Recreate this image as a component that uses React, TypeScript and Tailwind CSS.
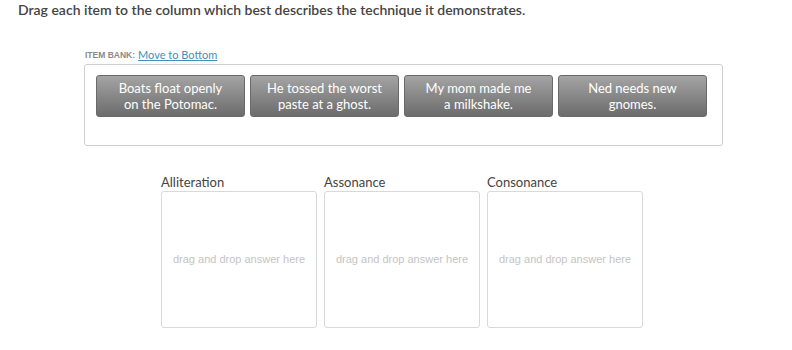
const items = [
  ['Boats float openly', 'on the Potomac.'],
  ['He tossed the worst', 'paste at a ghost.'],
  ['My mom made me', 'a milkshake.'],
  ['Ned needs new', 'gnomes.'],
];

const columns = ['Alliteration', 'Assonance', 'Consonance'];

export default function App() {
  return (
    <div className="w-[792px] h-[350px] bg-white font-['Lato',sans-serif] text-[#333]">
      <div className="pl-[18px] pt-[1px] text-[14px] leading-[18px] font-semibold text-[#444]">
        Drag each item to the column which best describes the technique it demonstrates.
      </div>

      {/* Item bank */}
      <div className="ml-[84px] mt-[28px] w-[639px]">
        <div className="flex items-end gap-[3px] pl-[1px] h-[14px]">
          <span className="font-['Liberation_Sans',sans-serif] text-[8.5px] font-bold text-[#8a8a8a] leading-[12px]">ITEM BANK:</span>
          <span className="text-[11px] leading-[13px] text-[#3f8fb8] underline">Move to Bottom</span>
        </div>
        <div className="mt-[3px] h-[82px] border border-[#cfcfcf] rounded-[3px] pl-[11px] pt-[10px] flex gap-[5px] items-start">
          {items.map((lines, i) => (
            <div
              key={i}
              className="w-[149px] h-[42px] rounded-[3px] border border-[#6a6a6a] bg-gradient-to-b from-[#a4a4a4] to-[#6c6c6c] flex flex-col items-center justify-center text-white text-[13px] leading-[16px]"
            >
              <span>{lines[0]}</span>
              <span>{lines[1]}</span>
            </div>
          ))}
        </div>
      </div>

      {/* Answer columns */}
      <div className="ml-[161px] mt-[28px] flex gap-[7px]">
        {columns.map((c) => (
          <div key={c} className="w-[156px]">
            <div className="text-[13px] leading-[16px] text-[#444]">{c}</div>
            <div className="mt-[1px] h-[137px] border border-[#d9d9d9] rounded-[3px] flex items-center justify-center">
              <span className="font-['Liberation_Sans',sans-serif] text-[11px] text-[#c4c4c4]">drag and drop answer here</span>
            </div>
          </div>
        ))}
      </div>
    </div>
  );
}
